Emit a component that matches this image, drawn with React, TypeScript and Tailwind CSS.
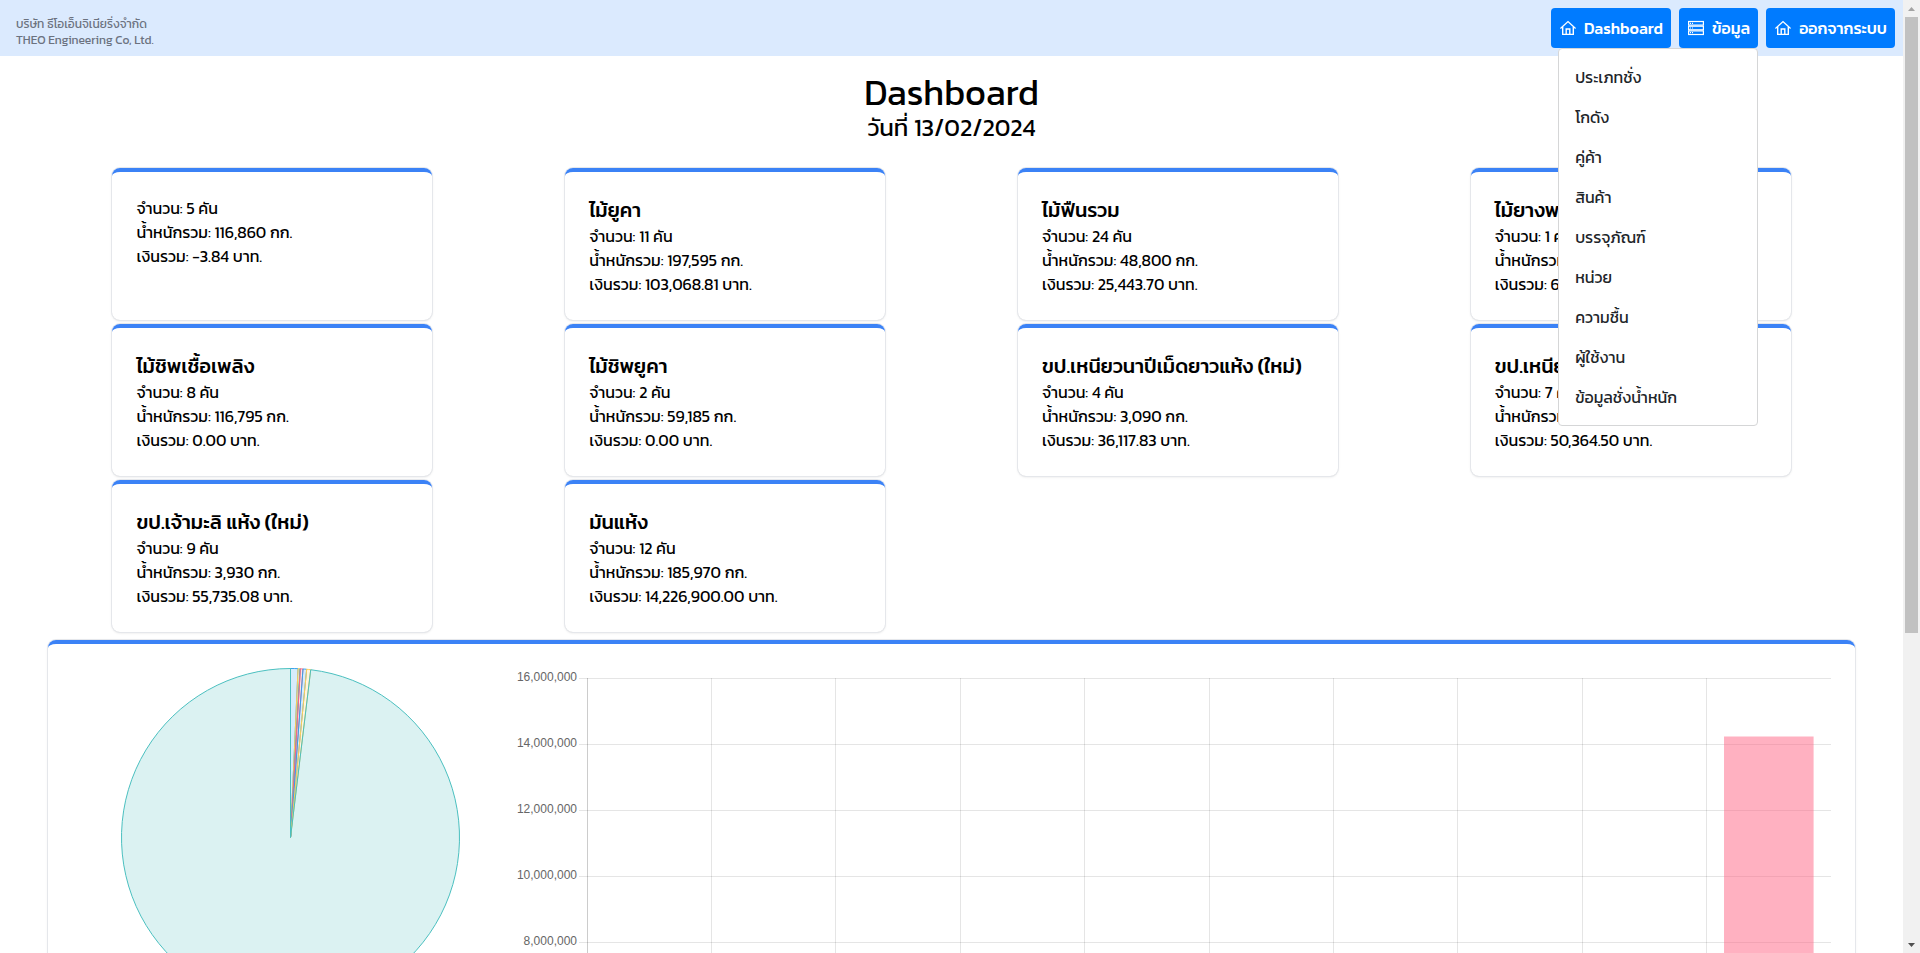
import React from "react";

type Card = { title?: string; count: string; weight: string; amount: string };

const cards: Card[] = [
  { count: "5", weight: "116,860", amount: "-3.84" },
  { title: "ไม้ยูคา", count: "11", weight: "197,595", amount: "103,068.81" },
  { title: "ไม้ฟืนรวม", count: "24", weight: "48,800", amount: "25,443.70" },
  { title: "ไม้ยางพารา", count: "1", weight: "2,790", amount: "6,138.00" },
  { title: "ไม้ชิพเชื้อเพลิง", count: "8", weight: "116,795", amount: "0.00" },
  { title: "ไม้ชิพยูคา", count: "2", weight: "59,185", amount: "0.00" },
  { title: "ขป.เหนียวนาปีเม็ดยาวแห้ง (ใหม่)", count: "4", weight: "3,090", amount: "36,117.83" },
  { title: "ขป.เหนียว", count: "7", weight: "4,120", amount: "50,364.50" },
  { title: "ขป.เจ้ามะลิ แห้ง (ใหม่)", count: "9", weight: "3,930", amount: "55,735.08" },
  { title: "มันแห้ง", count: "12", weight: "185,970", amount: "14,226,900.00" },
];

const amounts = cards.map((c) => Number(c.amount.replace(/,/g, "")));

const menu = [
  "ประเภทชั่ง",
  "โกดัง",
  "คู่ค้า",
  "สินค้า",
  "บรรจุภัณฑ์",
  "หน่วย",
  "ความชื้น",
  "ผู้ใช้งาน",
  "ข้อมูลชั่งน้ำหนัก",
];

const palette = [
  "255,99,132",
  "54,162,235",
  "255,206,86",
  "75,192,192",
  "153,102,255",
  "255,159,64",
];

function HomeIcon() {
  return (
    <svg viewBox="0 0 16 16" className="size-4" fill="none" stroke="currentColor" strokeWidth="1.4" aria-hidden="true">
      <path d="M0.4 8.5 8 1.6l7.6 6.9" />
      <path d="M2.7 7v7.4h10.6V7" />
      <path d="M6.2 14.4V9h3.6v5.4" />
    </svg>
  );
}

function ServerIcon() {
  return (
    <svg viewBox="0 0 16 16" className="size-4" fill="none" stroke="currentColor" strokeWidth="1.2" aria-hidden="true">
      <rect x="0.6" y="1.5" width="14.8" height="3.6" />
      <rect x="0.6" y="6.2" width="14.8" height="3.6" />
      <rect x="0.6" y="10.9" width="14.8" height="3.6" />
      <path d="M2 3.3h1M4 3.3h1M2 8h1M4 8h1M2 12.7h1M4 12.7h1" />
    </svg>
  );
}

const navButton =
  "flex h-10 items-center gap-2 rounded bg-[#007bff] pr-2 pl-[9px] font-medium text-white";

function PieChart() {
  const cx = 218.5;
  const cy = 169.5;
  const r = 169;
  const total = amounts.reduce((s, v) => s + Math.abs(v), 0);
  let angle = 0;
  return (
    <svg viewBox="0 0 437 437" className="w-full" role="img" aria-label="สัดส่วนเงินรวม">
      {amounts.map((v, i) => {
        const start = angle;
        angle += (Math.abs(v) / total) * Math.PI * 2;
        const end = angle;
        if (v === 0) return null;
        const color = palette[i % palette.length];
        const x1 = cx + r * Math.sin(start);
        const y1 = cy - r * Math.cos(start);
        const x2 = cx + r * Math.sin(end);
        const y2 = cy - r * Math.cos(end);
        return (
          <path
            key={i}
            d={`M${cx} ${cy}L${x1} ${y1}A${r} ${r} 0 ${end - start > Math.PI ? 1 : 0} 1 ${x2} ${y2}Z`}
            fill={`rgba(${color},0.2)`}
            stroke={`rgb(${color})`}
            strokeLinejoin="bevel"
          />
        );
      })}
    </svg>
  );
}

function BarChart() {
  const left = 74;
  const right = 1318;
  const top = 10;
  const rows = 8;
  const rowHeight = 66;
  const bottom = top + rows * rowHeight;
  const step = (right - left) / amounts.length;
  return (
    <svg viewBox="0 0 1318 660" className="w-full" role="img" aria-label="เงินรวมตามสินค้า">
      {Array.from({ length: rows + 1 }, (_, i) => {
        const y = top + i * rowHeight;
        return (
          <g key={i}>
            <rect x={left - 8} y={y} width={right - left + 8} height="1" fill="rgba(0,0,0,0.1)" />
            <text
              x={left - 10}
              y={y + 3}
              textAnchor="end"
              fill="#666666"
              className="font-['Liberation_Sans',Arial,sans-serif] text-xs"
            >
              {(16000000 - i * 2000000).toLocaleString("en-US")}
            </text>
          </g>
        );
      })}
      {amounts.map((_, i) => (
        <rect
          key={i}
          x={Math.floor(left + i * step)}
          y={top}
          width="1"
          height={bottom - top}
          fill={i === 0 ? "rgba(0,0,0,0.2)" : "rgba(0,0,0,0.1)"}
        />
      ))}
      {amounts.map((v, i) => {
        const h = (Math.max(v, 0) / 16000000) * rows * rowHeight;
        return (
          <rect
            key={i}
            x={left + i * step + step * 0.14}
            y={bottom - h}
            width={step * 0.72}
            height={h}
            fill="rgba(255,99,132,0.5)"
          />
        );
      })}
    </svg>
  );
}

export default function App() {
  return (
    <div className="flex h-screen bg-white font-['Kanit','Roboto','Noto_Sans',sans-serif] text-base text-black">
      <div className="min-w-0 flex-1 overflow-hidden">
        <header className="flex h-14 items-center justify-between bg-[#dbeafe] pr-2 pl-4">
          <div className="pt-2 text-xs text-[#6b7280]">
            <p>บริษัท ธีโอเอ็นจิเนียริ่งจำกัด</p>
            <p>THEO Engineering Co, Ltd.</p>
          </div>
          <nav className="flex gap-2">
            <button type="button" className={navButton}>
              <HomeIcon />
              Dashboard
            </button>
            <div className="relative">
              <button type="button" className={navButton} aria-expanded="true">
                <ServerIcon />
                ข้อมูล
              </button>
              <ul className="absolute top-full right-0 z-10 w-50 rounded border border-[#d5d6d7] bg-white py-2 text-[#212529]">
                {menu.map((m) => (
                  <li key={m}>
                    <a href="#" className="block px-4 py-2">
                      {m}
                    </a>
                  </li>
                ))}
              </ul>
            </div>
            <button type="button" className={navButton}>
              <HomeIcon />
              ออกจากระบบ
            </button>
          </nav>
        </header>

        <main className="px-12 pt-4">
          <div className="text-center">
            <h1 className="text-4xl">Dashboard</h1>
            <p className="text-2xl">วันที่ 13/02/2024</p>
          </div>

          <section className="mt-6 grid grid-cols-4 gap-1">
            {cards.map((c, i) => (
              <article
                key={i}
                className="w-80 justify-self-center rounded-lg border-t-4 border-[#3b82f6] p-6 shadow-sm ring-1 ring-gray-200"
              >
                {c.title && <h2 className="text-xl font-medium">{c.title}</h2>}
                <p>จำนวน: {c.count} คัน</p>
                <p>น้ำหนักรวม: {c.weight} กก.</p>
                <p>เงินรวม: {c.amount} บาท.</p>
              </article>
            ))}
          </section>

          <section className="mt-2 grid grid-cols-[437px_1fr] gap-1 rounded-lg border-t-4 border-[#3b82f6] p-6 shadow-sm ring-1 ring-gray-200">
            <PieChart />
            <BarChart />
          </section>
        </main>
      </div>

      <div className="flex w-[17px] flex-col items-center justify-between bg-[#f1f1f1]" aria-hidden="true">
        <svg viewBox="0 0 17 17" className="size-[17px]">
          <path d="M5 11h7L8.5 7z" fill="#a3a3a3" />
        </svg>
        <div className="w-[13px] flex-1">
          <div className="h-[67%] bg-[#c1c1c1]" />
        </div>
        <svg viewBox="0 0 17 17" className="size-[17px]">
          <path d="M5 7h7L8.5 11z" fill="#505050" />
        </svg>
      </div>
    </div>
  );
}
